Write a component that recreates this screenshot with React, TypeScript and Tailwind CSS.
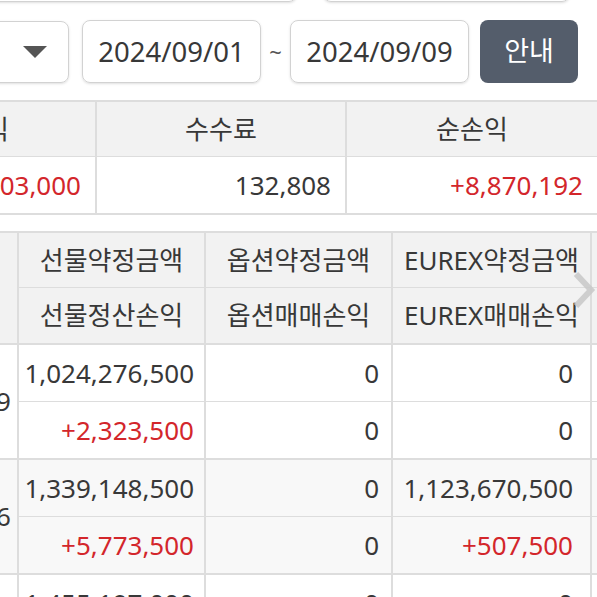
import React from 'react';

const font = { fontFamily: '"Noto Sans", "Noto Sans CJK KR", sans-serif' };

type Group = {
  label: string;
  bg: string;
  top: string[];
  bottom: { v: string; red?: boolean }[];
};

const groups: Group[] = [
  {
    label: '09/09',
    bg: 'bg-white',
    top: ['1,024,276,500', '0', '0', ''],
    bottom: [{ v: '+2,323,500', red: true }, { v: '0' }, { v: '0' }, { v: '' }],
  },
  {
    label: '09/06',
    bg: 'bg-[#f8f8f8]',
    top: ['1,339,148,500', '0', '1,123,670,500', ''],
    bottom: [{ v: '+5,773,500', red: true }, { v: '0' }, { v: '+507,500', red: true }, { v: '' }],
  },
  {
    label: '09/05',
    bg: 'bg-white',
    top: ['1,455,197,000', '0', '0', ''],
    bottom: [{ v: '+1,200,000', red: true }, { v: '0' }, { v: '0' }, { v: '' }],
  },
];

const padR = ['pr-[10px]', 'pr-[12px]', 'pr-[17px]', 'pr-[12px]'];

export default function App() {
  return (
    <div className="relative w-[597px] h-[597px] overflow-hidden bg-white text-[#383838]" style={font}>
      {/* previous filter row, mostly scrolled off */}
      <div className="flex mt-[-60px] h-[62px]">
        <div className="ml-[-20px] w-[317px] h-full border border-[#d2d2d2] rounded-lg shadow-sm"></div>
        <div className="ml-[26px] w-[247px] h-full border border-[#d2d2d2] rounded-lg shadow-sm"></div>
      </div>

      {/* date filter row */}
      <div className="flex items-center mt-[18px] h-[63px]">
        <div className="ml-[-40px] w-[109px] h-[62px] border border-[#d2d2d2] rounded-lg flex items-center justify-end pr-[21px] shadow-sm">
          <div className="w-0 h-0 border-l-[12px] border-r-[12px] border-t-[12px] border-l-transparent border-r-transparent border-t-[#555]"></div>
        </div>
        <div className="ml-[13px] w-[179px] h-[63px] border border-[#d2d2d2] rounded-lg flex items-center justify-center text-[27.5px] shadow-sm">
          2024/09/01
        </div>
        <div className="w-[29px] text-center text-[22px] text-[#555]">~</div>
        <div className="w-[179px] h-[63px] border border-[#d2d2d2] rounded-lg flex items-center justify-center text-[27.5px] shadow-sm">
          2024/09/09
        </div>
        <button className="ml-[11px] w-[98px] h-[63px] rounded-lg bg-[#545d6b] text-white text-[27px] flex items-center justify-center">
          안내
        </button>
      </div>

      {/* summary */}
      <div className="mt-[17px] ml-[-177px] w-[800px] grid grid-cols-[274px_250px_276px] border-y-2 border-[#dddddd]">
        <div className="h-[55px] bg-[#f2f2f2] border-r-2 border-b border-[#dddddd] flex items-center justify-end pr-[86px] text-[26px] whitespace-nowrap">청산손익</div>
        <div className="h-[55px] bg-[#f2f2f2] border-r-2 border-b border-[#dddddd] flex items-center justify-center text-[26px]">수수료</div>
        <div className="h-[55px] bg-[#f2f2f2] border-b border-[#dddddd] flex items-center justify-center text-[26px] pr-[26px]">순손익</div>
        <div className="h-[56px] border-r-2 border-[#dddddd] flex items-center justify-end pr-[14px] text-[26px] text-[#d3262b]">+9,003,000</div>
        <div className="h-[56px] border-r-2 border-[#dddddd] flex items-center justify-end pr-[14px] text-[26px]">132,808</div>
        <div className="h-[56px] flex items-center justify-end pr-[40px] text-[26px] text-[#d3262b]">+8,870,192</div>
      </div>

      {/* detail table */}
      <div className="mt-[16px] ml-[-100px] w-[800px] grid grid-cols-[119px_187px_187px_199px_108px] border-t-2 border-[#dddddd]">
        <div className="row-span-2 bg-[#f2f2f2] border-r-2 border-b-2 border-[#dddddd]"></div>
        <div className="h-[55px] bg-[#f2f2f2] border-r-2 border-b border-[#dddddd] flex items-center justify-center text-[26px]">선물약정금액</div>
        <div className="h-[55px] bg-[#f2f2f2] border-r-2 border-b border-[#dddddd] flex items-center justify-center text-[26px]">옵션약정금액</div>
        <div className="h-[55px] bg-[#f2f2f2] border-r-2 border-b border-[#dddddd] flex items-center justify-center text-[26px] whitespace-nowrap">EUREX약정금액</div>
        <div className="h-[55px] bg-[#f2f2f2] border-b border-[#dddddd]"></div>
        <div className="h-[57px] bg-[#f2f2f2] border-r-2 border-b-2 border-[#dddddd] flex items-center justify-center text-[26px]">선물정산손익</div>
        <div className="h-[57px] bg-[#f2f2f2] border-r-2 border-b-2 border-[#dddddd] flex items-center justify-center text-[26px]">옵션매매손익</div>
        <div className="h-[57px] bg-[#f2f2f2] border-r-2 border-b-2 border-[#dddddd] flex items-center justify-center text-[26px] whitespace-nowrap">EUREX매매손익</div>
        <div className="h-[57px] bg-[#f2f2f2] border-b-2 border-[#dddddd]"></div>

        {groups.map((g) => (
          <React.Fragment key={g.label}>
            <div className={`row-span-2 ${g.bg} border-r-2 border-b-2 border-[#dddddd] flex items-center justify-end pr-[6px] text-[26px]`}>
              {g.label}
            </div>
            {g.top.map((v, i) => (
              <div
                key={'t' + i}
                className={`h-[57px] ${g.bg} ${i < 3 ? 'border-r-2' : ''} border-b border-[#dddddd] flex items-center justify-end ${padR[i]} text-[26px]`}
              >
                {v}
              </div>
            ))}
            {g.bottom.map((c, i) => (
              <div
                key={'b' + i}
                className={`h-[58px] ${g.bg} ${i < 3 ? 'border-r-2' : ''} border-b-2 border-[#dddddd] flex items-center justify-end ${padR[i]} text-[26px] ${c.red ? 'text-[#d3262b]' : ''}`}
              >
                {c.v}
              </div>
            ))}
          </React.Fragment>
        ))}
      </div>

      {/* scroll hint chevron */}
      <svg className="absolute left-[571px] top-[270px]" width="26" height="40" viewBox="0 0 26 40">
        <polyline points="5,4 20,20 5,36" fill="none" stroke="#c8c8c8" strokeWidth="6" strokeOpacity="0.85" />
      </svg>
    </div>
  );
}
